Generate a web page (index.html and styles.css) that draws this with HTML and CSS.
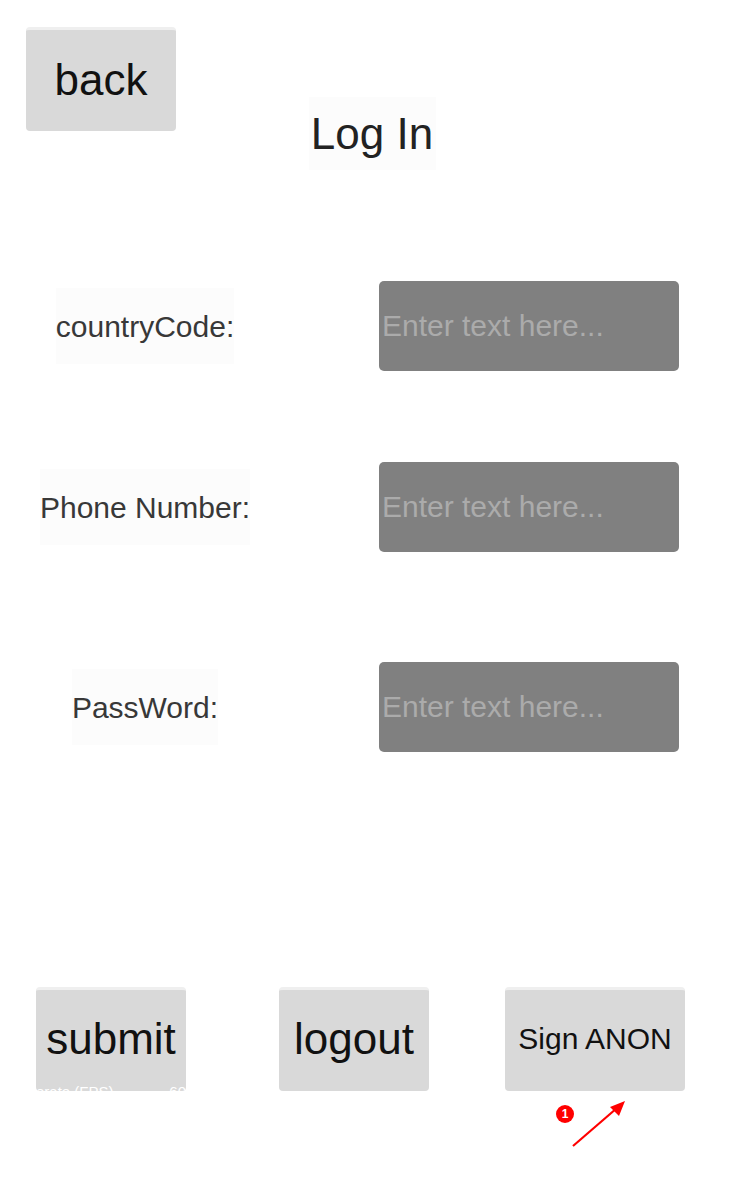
FILE: index.html
```html
<!DOCTYPE html>
<html lang="en">
<head>
<meta charset="utf-8">
<title>Log In</title>
<link rel="stylesheet" href="styles.css">
</head>
<body>
<div class="page">
  <header class="header">
    <button class="btn btn-back">back</button>
    <h1 class="title">Log In</h1>
    <div></div>
  </header>

  <form class="form">
    <div class="row row-1">
      <label class="label">countryCode:</label>
      <input class="field" type="text" placeholder="Enter text here...">
    </div>
    <div class="row row-2">
      <label class="label">Phone Number:</label>
      <input class="field" type="text" placeholder="Enter text here...">
    </div>
    <div class="row row-3">
      <label class="label">PassWord:</label>
      <input class="field" type="password" placeholder="Enter text here...">
    </div>
  </form>

  <div class="actions">
    <button class="btn btn-submit">submit<span class="fps"><span class="fps-label">erate (FPS)</span><span class="fps-value">60</span></span></button>
    <button class="btn btn-logout">logout</button>
    <div class="anon-wrap">
      <button class="btn btn-anon">Sign ANON</button>
      <span class="badge">1</span>
      <svg class="arrow" width="60" height="50" viewBox="0 0 60 50" aria-hidden="true">
        <line x1="4" y1="47" x2="48" y2="9" stroke="#ff0000" stroke-width="2.2"/>
        <polygon points="56,2 41,8 50,17" fill="#ff0000"/>
      </svg>
    </div>
  </div>
</div>
</body>
</html>
```

FILE: styles.css
```css
html, body {
  margin: 0;
  padding: 0;
  background: #ffffff;
}

.page {
  width: 744px;
  min-height: 1195px;
  font-family: "Liberation Sans", Arial, sans-serif;
}

.btn {
  box-sizing: border-box;
  border: none;
  border-top: 3px solid #efefef;
  border-radius: 4px;
  background: #d9d9d9;
  color: #111111;
  font-family: "Liberation Sans", Arial, sans-serif;
  padding: 0 0 3px 0;
  margin: 0;
  cursor: pointer;
}

.header {
  display: grid;
  grid-template-columns: 1fr auto 1fr;
  align-items: start;
  padding-top: 27px;
  padding-left: 26px;
}

.btn-back {
  width: 150px;
  height: 104px;
  font-size: 44px;
  padding-top: 1px;
  justify-self: start;
}

.title {
  margin: 70px 0 0 -26px;
  width: 127px;
  height: 73px;
  line-height: 73px;
  text-align: center;
  font-size: 44px;
  font-weight: normal;
  color: #222222;
  background: #fcfcfc;
}

.form {
  margin-top: 111px;
}

.row {
  display: grid;
  grid-template-columns: 290px 300px;
  column-gap: 89px;
  align-items: center;
}

.row-2 {
  margin-top: 91px;
}

.row-3 {
  margin-top: 110px;
}

.label {
  justify-self: center;
  font-size: 30px;
  color: #383838;
  background: #fcfcfc;
  line-height: 74px;
  padding: 2px 0 0 0;
}

.field {
  box-sizing: border-box;
  width: 300px;
  height: 90px;
  border: none;
  border-radius: 5px;
  background: #808080;
  padding: 0 0 0 3px;
  font-family: "Liberation Sans", Arial, sans-serif;
  font-size: 30px;
  color: #ffffff;
  outline: none;
}

.field::placeholder {
  color: #ababab;
  opacity: 1;
}

.actions {
  display: flex;
  align-items: flex-start;
  margin-top: 235px;
  padding-left: 36px;
}

.btn-submit {
  position: relative;
  overflow: hidden;
  width: 150px;
  height: 104px;
  font-size: 44px;
}

.fps {
  position: absolute;
  left: 0;
  top: 94px;
  width: 100%;
  display: flex;
  justify-content: space-between;
  font-size: 15px;
  line-height: 15px;
  color: #ffffff;
}

.btn-logout {
  width: 150px;
  height: 104px;
  font-size: 44px;
  margin-left: 93px;
}

.anon-wrap {
  position: relative;
  margin-left: 76px;
}

.btn-anon {
  width: 180px;
  height: 104px;
  font-size: 30px;
  display: block;
}

.badge {
  position: absolute;
  left: 51px;
  top: 118px;
  width: 18px;
  height: 18px;
  border-radius: 50%;
  background: #ff0000;
  color: #ffffff;
  font-size: 12px;
  font-weight: bold;
  line-height: 18px;
  text-align: center;
}

.arrow {
  position: absolute;
  left: 64px;
  top: 112px;
}
```
